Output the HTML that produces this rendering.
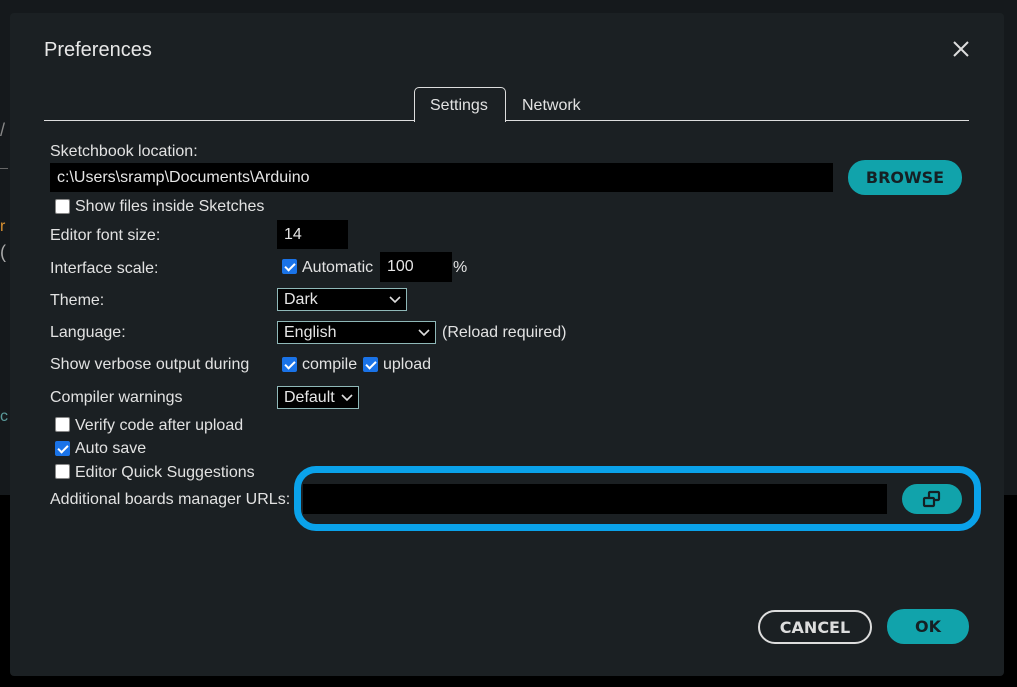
<!DOCTYPE html>
<html><head><meta charset="utf-8"><style>
*{margin:0;padding:0;box-sizing:border-box}
body{width:1017px;height:687px;overflow:hidden;background:#15191c;font-family:"Liberation Sans",sans-serif;position:relative;color:#e6e6e6}
.a{position:absolute}
.lbl{position:absolute;font-size:16px;color:#e2e2e2;white-space:nowrap;margin-top:1px}
.inp{position:absolute;background:#000;color:#e6e6e6;font-size:16px;padding-left:7px;line-height:30px}
.sel{position:absolute;background:#000;border:1px solid #8fb8b8;color:#e6e6e6;font-size:16px;padding-left:6px;line-height:22px}
.sel svg{position:absolute;right:5px;top:7px}
.cb{position:absolute;width:15px;height:15px;border-radius:2px;background:#fff;border:1px solid #888}
.cb.on{background:#1a73e8;border-color:#1a73e8}
.cb.on::after{content:"";position:absolute;left:4px;top:1px;width:4px;height:8px;border:solid #fff;border-width:0 2px 2px 0;transform:rotate(45deg)}
.btn{position:absolute;background:#11a3ab;border-radius:17px;color:#152024;font-weight:bold;font-size:16px;text-align:center;font-family:"DejaVu Sans","Liberation Sans",sans-serif;letter-spacing:0}
</style></head><body>
<div class="a" style="left:0;top:495px;width:1017px;height:192px;background:#000"></div>
<div class="a" style="left:0;top:120px;color:#888;font-size:18px">/</div>
<div class="a" style="left:0;top:168px;width:8px;height:1px;background:#666"></div>
<div class="a" style="left:0;top:218px;color:#d89030;font-size:16px">r</div>
<div class="a" style="left:0;top:242px;color:#aaa;font-size:18px">(</div>
<div class="a" style="left:0;top:408px;color:#5a9a9a;font-size:16px">c</div>
<div class="a" style="left:10px;top:13px;width:994px;height:663px;background:#1b2023;border-radius:4px"></div>
<div class="lbl" style="left:44px;top:38px;font-size:20px;color:#e8e8e8">Preferences</div>
<svg class="a" style="left:953px;top:41px" width="16" height="16"><path d="M1 1L15 15M15 1L1 15" stroke="#ddd" stroke-width="2"/></svg>
<div class="a" style="left:44px;top:120px;width:925px;height:1px;background:#ddd"></div>
<div class="a" style="left:414px;top:87px;width:92px;height:35px;background:#1b2023;border:1px solid #ddd;border-bottom:none;border-radius:5px 5px 0 0"></div>
<div class="lbl" style="left:430px;top:96px">Settings</div>
<div class="lbl" style="left:522px;top:96px">Network</div>
<div class="lbl" style="left:50px;top:142px">Sketchbook location:</div>
<div class="inp" style="left:50px;top:163px;width:783px;height:29px">c:\Users\sramp\Documents\Arduino</div>
<div class="btn" style="left:848px;top:160px;width:114px;height:35px;line-height:36px">BROWSE</div>
<div class="cb" style="left:55px;top:199px"></div><div class="lbl" style="left:75px;top:197px">Show files inside Sketches</div>
<div class="lbl" style="left:50px;top:226px">Editor font size:</div>
<div class="inp" style="left:277px;top:220px;width:71px;height:29px">14</div>
<div class="lbl" style="left:50px;top:259px">Interface scale:</div>
<div class="cb on" style="left:282px;top:259px"></div><div class="lbl" style="left:302px;top:258px">Automatic</div>
<div class="inp" style="left:380px;top:252px;width:72px;height:30px">100</div>
<div class="lbl" style="left:453px;top:258px">%</div>
<div class="lbl" style="left:50px;top:291px">Theme:</div>
<div class="sel" style="left:277px;top:288px;width:130px;height:23px">Dark<svg width="12" height="8"><path d="M1 1L6 6L11 1" stroke="#ddd" stroke-width="1.6" fill="none"/></svg></div>
<div class="lbl" style="left:50px;top:323px">Language:</div>
<div class="sel" style="left:277px;top:321px;width:159px;height:23px">English<svg width="12" height="8"><path d="M1 1L6 6L11 1" stroke="#ddd" stroke-width="1.6" fill="none"/></svg></div>
<div class="lbl" style="left:442px;top:323px">(Reload required)</div>
<div class="lbl" style="left:50px;top:355px">Show verbose output during</div>
<div class="cb on" style="left:282px;top:357px"></div><div class="lbl" style="left:302px;top:355px">compile</div>
<div class="cb on" style="left:363px;top:357px"></div><div class="lbl" style="left:383px;top:355px">upload</div>
<div class="lbl" style="left:50px;top:388px">Compiler warnings</div>
<div class="sel" style="left:277px;top:386px;width:82px;height:23px">Default<svg width="12" height="8"><path d="M1 1L6 6L11 1" stroke="#ddd" stroke-width="1.6" fill="none"/></svg></div>
<div class="cb" style="left:55px;top:417px"></div><div class="lbl" style="left:75px;top:416px">Verify code after upload</div>
<div class="cb on" style="left:55px;top:441px"></div><div class="lbl" style="left:75px;top:439px">Auto save</div>
<div class="cb" style="left:55px;top:464px"></div><div class="lbl" style="left:75px;top:463px">Editor Quick Suggestions</div>
<div class="lbl" style="left:50px;top:490px">Additional boards manager URLs:</div>
<div class="a" style="left:294px;top:466px;width:687px;height:65px;border:7px solid #0aa2ea;border-radius:22px"></div>
<div class="a" style="left:303px;top:484px;width:584px;height:30px;background:#000"></div>
<div class="btn" style="left:902px;top:484px;width:60px;height:30px"><svg style="margin-top:6px" width="20" height="18" viewBox="0 0 20 18"><rect x="7" y="2" width="10" height="8" rx="1" fill="none" stroke="#152024" stroke-width="2.2"/><rect x="2" y="8" width="10" height="8" rx="1" fill="#11a3ab" stroke="#152024" stroke-width="2.2"/></svg></div>
<div class="a" style="left:758px;top:610px;width:114px;height:34px;border:2px solid #ddd;border-radius:17px;color:#ddd;font-weight:bold;font-size:16px;text-align:center;line-height:31px;font-family:'DejaVu Sans','Liberation Sans',sans-serif">CANCEL</div>
<div class="btn" style="left:887px;top:609px;width:82px;height:35px;line-height:36px">OK</div>
</body></html>
